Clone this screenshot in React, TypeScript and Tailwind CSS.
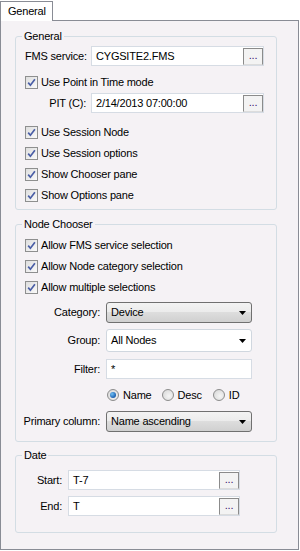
import React from "react";

function CheckBox({ label }: { label: string }) {
  return (
    <div className="flex h-[21px] items-center pl-[9px]">
      <span className="flex h-[13px] w-[13px] items-center justify-center border border-[#8e8f8f] bg-[linear-gradient(135deg,#dedede,#fafafa)]">
        <svg width="9" height="9" viewBox="0 0 9 9">
          <path d="M1.2 4.6 L3.4 7.2 L7.9 1.2" fill="none" stroke="#4a5ea6" strokeWidth="1.7" />
        </svg>
      </span>
      <span className="ml-[3px]">{label}</span>
    </div>
  );
}

function DotsButton() {
  return (
    <span className="flex h-[17px] w-[20px] items-center justify-center border border-[#8b8b8b] border-b-[#dcdcdc] bg-[#f3f3f3] pb-[1px] text-[11px] leading-none text-[#3a1670]">
      ...
    </span>
  );
}

function TextBox({ value, button, width }: { value: string; button?: boolean; width: string }) {
  return (
    <div className={`flex h-[20px] items-center border border-[#d6dce4] bg-white ${width}`}>
      <span className="flex-1 pl-[4px]">{value}</span>
      {button && <DotsButton />}
    </div>
  );
}

function Select({ value, editable, height }: { value: string; editable?: boolean; height: string }) {
  return (
    <div
      className={`flex w-[146px] items-center rounded-[3px] border ${height} ${
        editable
          ? "border-[#d0d7df] bg-white"
          : "border-[#707070] bg-[linear-gradient(#f3f3f3,#ebebeb_50%,#dddddd_50%,#d0d0d0)]"
      }`}
    >
      <span className="flex-1 pl-[4px]">{value}</span>
      <svg className="mr-[5px]" width="7" height="4" viewBox="0 0 7 4">
        <path d="M0 0h7L3.5 4z" fill="#000" />
      </svg>
    </div>
  );
}

function Radio({ label, checked }: { label: string; checked?: boolean }) {
  return (
    <div className="flex items-center">
      <span className="flex h-[12px] w-[12px] items-center justify-center rounded-full border border-[#8c8c8c] bg-[radial-gradient(circle_at_60%_60%,#f5f5f5,#d4d4d4)]">
        {checked && (
          <span className="h-[6px] w-[6px] rounded-full bg-[radial-gradient(circle_at_35%_35%,#6fc0f5,#1b5fb0_70%,#0d3f85)]" />
        )}
      </span>
      <span className="ml-[4px]">{label}</span>
    </div>
  );
}

function Label({ text, width }: { text: string; width: string }) {
  return <span className={`flex shrink-0 justify-end whitespace-nowrap ${width}`}>{text}</span>;
}

function Group({ title, children, className }: { title: string; children: React.ReactNode; className: string }) {
  return (
    <fieldset className={`w-[262px] rounded-[3px] border border-[#d3dde4] ${className}`}>
      <legend className="ml-[6px] px-[2px] leading-[14px]">{title}</legend>
      {children}
    </fieldset>
  );
}

export default function App() {
  return (
    <div className="h-[551px] w-[300px] bg-white font-['Liberation_Sans',Arial,sans-serif] text-[11px] leading-[13px] tracking-[-0.2px] text-black">
      <div className="relative z-10 -mb-px ml-0 mt-px flex h-[20px] w-[53px] items-center border border-b-0 border-[#898c95] bg-white pl-[7px]">
        General
      </div>
      <div className="h-[530px] w-[299px] border border-[#898c95] bg-[#f5f2f5] pl-[14px]">
        <Group title="General" className="mt-[8px] pb-[3px]">
          <div className="mt-[3px] flex h-[20px] items-center pl-[9px]">
            <span className="w-[66px] whitespace-nowrap">FMS service:</span>
            <TextBox value="CYGSITE2.FMS" button width="w-[173px]" />
          </div>
          <div className="mt-[6px]">
            <CheckBox label="Use Point in Time mode" />
          </div>
          <div className="flex h-[20px] items-center pl-[9px]">
            <Label text="PIT (C):" width="w-[61px]" />
            <div className="ml-[5px]">
              <TextBox value="2/14/2013 07:00:00" button width="w-[173px]" />
            </div>
          </div>
          <div className="mt-[9px]">
            <CheckBox label="Use Session Node" />
            <CheckBox label="Use Session options" />
            <CheckBox label="Show Chooser pane" />
            <CheckBox label="Show Options pane" />
          </div>
        </Group>

        <Group title="Node Chooser" className="mt-[7px] pb-[9px]">
          <div className="mt-[4px]">
            <CheckBox label="Allow FMS service selection" />
            <CheckBox label="Allow Node category selection" />
            <CheckBox label="Allow multiple selections" />
          </div>
          <div className="mt-[4px] flex items-center pl-[9px]">
            <Label text="Category:" width="w-[75px]" />
            <div className="ml-[6px]">
              <Select value="Device" height="h-[21px]" />
            </div>
          </div>
          <div className="mt-[6px] flex items-center pl-[9px]">
            <Label text="Group:" width="w-[75px]" />
            <div className="ml-[6px]">
              <Select value="All Nodes" editable height="h-[23px]" />
            </div>
          </div>
          <div className="mt-[7px] flex items-center pl-[9px]">
            <Label text="Filter:" width="w-[75px]" />
            <div className="ml-[6px]">
              <TextBox value="*" width="w-[146px]" />
            </div>
          </div>
          <div className="mt-[8px] flex h-[16px] items-center pl-[91px]">
            <Radio label="Name" checked />
            <div className="ml-[10px]">
              <Radio label="Desc" />
            </div>
            <div className="ml-[11px]">
              <Radio label="ID" />
            </div>
          </div>
          <div className="mt-[8px] flex items-center pl-[9px]">
            <Label text="Primary column:" width="w-[75px]" />
            <div className="ml-[6px]">
              <Select value="Name ascending" height="h-[21px]" />
            </div>
          </div>
        </Group>

        <Group title="Date" className="mt-[6px] pb-[16px]">
          <div className="mt-[8px] flex items-center pl-[9px]">
            <Label text="Start:" width="w-[37px]" />
            <div className="ml-[6px]">
              <TextBox value="T-7" button width="w-[172px]" />
            </div>
          </div>
          <div className="mt-[6px] flex items-center pl-[9px]">
            <Label text="End:" width="w-[37px]" />
            <div className="ml-[6px]">
              <TextBox value="T" button width="w-[172px]" />
            </div>
          </div>
        </Group>
      </div>
    </div>
  );
}
